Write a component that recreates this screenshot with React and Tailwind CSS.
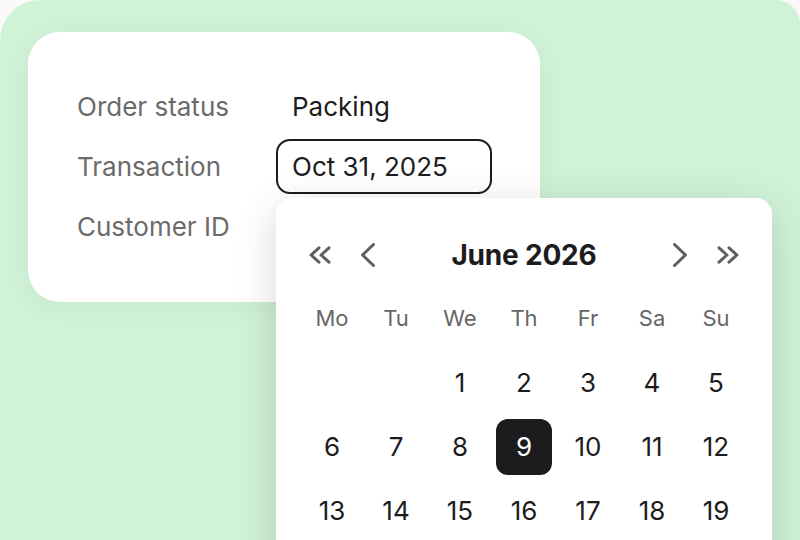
import React from "react";

const font = { fontFamily: "Inter, 'Noto Sans', sans-serif" };

function DoubleLeft() {
  return (
    <svg width="24" height="18" viewBox="0 0 24 18" fill="none" stroke="#5f5f5f" strokeWidth="3" strokeLinecap="round" strokeLinejoin="round">
      <polyline points="11,1.8 3,9 11,16.2" />
      <polyline points="21,1.8 13,9 21,16.2" />
    </svg>
  );
}
function DoubleRight() {
  return (
    <svg width="24" height="18" viewBox="0 0 24 18" fill="none" stroke="#5f5f5f" strokeWidth="3" strokeLinecap="round" strokeLinejoin="round">
      <polyline points="3,1.8 11,9 3,16.2" />
      <polyline points="13,1.8 21,9 13,16.2" />
    </svg>
  );
}
function Left() {
  return (
    <svg width="16" height="24" viewBox="0 0 16 24" fill="none" stroke="#5f5f5f" strokeWidth="3" strokeLinecap="round" strokeLinejoin="round">
      <polyline points="13.5,1.5 2.5,12 13.5,22.5" />
    </svg>
  );
}
function Right() {
  return (
    <svg width="16" height="24" viewBox="0 0 16 24" fill="none" stroke="#5f5f5f" strokeWidth="3" strokeLinecap="round" strokeLinejoin="round">
      <polyline points="2.5,1.5 13.5,12 2.5,22.5" />
    </svg>
  );
}

const days = [
  [null, null, 1, 2, 3, 4, 5],
  [6, 7, 8, 9, 10, 11, 12],
  [13, 14, 15, 16, 17, 18, 19],
];

function Calendar() {
  return (
    <div className="absolute left-0 top-[59px] w-[496px] h-[400px] bg-white rounded-[16px] px-[24px] pt-[25px] shadow-[0_10px_40px_rgba(0,0,0,0.16)] z-10">
      <div className="h-[64px] flex items-center">
        <button className="w-[40px] h-[40px] flex items-center justify-center"><DoubleLeft /></button>
        <button className="ml-[8px] w-[40px] h-[40px] flex items-center justify-center"><Left /></button>
        <div className="flex-1 text-center text-[28px] font-bold text-[#1c1c1e] tracking-[-0.2px]">June 2026</div>
        <button className="w-[40px] h-[40px] flex items-center justify-center"><Right /></button>
        <button className="ml-[8px] w-[40px] h-[40px] flex items-center justify-center"><DoubleRight /></button>
      </div>
      <div className="grid grid-cols-7">
        {["Mo", "Tu", "We", "Th", "Fr", "Sa", "Su"].map((d) => (
          <div key={d} className="h-[64px] flex items-center justify-center text-[22px] text-[#666666]">{d}</div>
        ))}
        {days.flat().map((d, i) => (
          <div key={i} className="h-[64px] flex items-center justify-center">
            {d === 9 ? (
              <div className="w-[56px] h-[56px] rounded-[12px] bg-[#1c1c1f] text-white flex items-center justify-center text-[26px]">9</div>
            ) : (
              <span className="text-[26px] text-[#1c1c1e]">{d ?? ""}</span>
            )}
          </div>
        ))}
      </div>
    </div>
  );
}

export default function App() {
  return (
    <div className="w-[800px] h-[540px] overflow-hidden bg-[#fbf9fa]" style={font}>
      <div className="w-[800px] h-[540px] bg-[#d0f3d8] rounded-tl-[40px] rounded-tr-[24px] pt-[32px] pl-[28px]">
        <div className="w-[512px] h-[270px] bg-white rounded-[32px] shadow-[0_4px_24px_rgba(0,0,0,0.05)] pt-[44px] pl-[49px]">
          <div className="flex h-[60px] items-center">
            <div className="w-[199px] text-[26px] text-[#6b6b6b]">Order status</div>
            <div className="pl-[16px] text-[26px] text-[#1c1c1e]">Packing</div>
          </div>
          <div className="flex h-[60px] items-center">
            <div className="w-[199px] text-[26px] text-[#6b6b6b]">Transaction</div>
            <div className="relative">
              <div className="w-[216px] h-[55px] border-2 border-[#1c1c1e] rounded-[14px] px-[14px] flex items-center text-[26px] text-[#1c1c1e]">
                Oct 31, 2025
              </div>
              <Calendar />
            </div>
          </div>
          <div className="flex h-[60px] items-center">
            <div className="w-[199px] text-[26px] text-[#6b6b6b]">Customer ID</div>
          </div>
        </div>
      </div>
    </div>
  );
}
